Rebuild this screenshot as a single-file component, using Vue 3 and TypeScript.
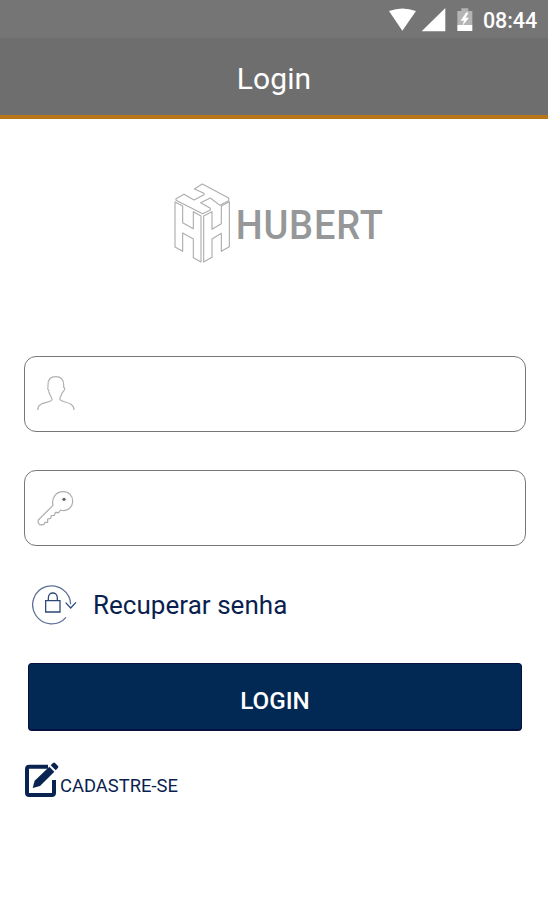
<script setup lang="ts">
import { ref } from 'vue'

const user = ref<string>('')
const password = ref<string>('')
</script>

<template>
  <main class="screen">
    <div class="status">
      <svg class="status-icons" viewBox="0 0 270 114" aria-hidden="true">
        <path d="M57 33Q97 18 138 33L97 92Z" fill="#fff" />
        <path d="M155 94L226 24V94Z" fill="#fff" />
        <path d="M262 33h12v-8h21v8h12v43h-45Z" fill="#b4b4b4" />
        <path d="M262 75h45v18h-45Z" fill="#fff" />
        <path d="M289 37l-17 25h10l-5 16 20-25h-10l8-15Z" fill="#fff" />
      </svg>
      <span class="clock">08:44</span>
    </div>
    <header class="bar"><h1>Login</h1></header>

    <svg class="logo" viewBox="0 0 720 315" role="img" aria-label="HUBERT">
      <g fill="none" stroke="#adadad" stroke-width="3.4" stroke-linejoin="round">
        <path d="M127 42L206 84V92L180 106L151 84L122 98L151 115V120L128 131L48 91V86L72 73L102 90L132 74V70L103 57Z" />
        <path d="M45 96L68 108V158L100 176V125L123 138V276L100 263V207L68 189V244L45 231Z" />
        <path d="M131 138L156 125V178L184 161V108L208 95V230L184 244V190L156 207V262L131 276Z" />
      </g>
      <text transform="translate(227 208) scale(.92 1)" x="0" y="0" textLength="480" lengthAdjust="spacing">HUBERT</text>
    </svg>

    <form class="form" @submit.prevent>
      <label class="field">
        <svg viewBox="0 0 120 114" aria-hidden="true">
          <path d="M8 105C8 78 45 86 51 74Q51 67 46 62Q41 52 41 46Q36 42 39 36V30Q38 5 62 5Q86 5 86 30V37Q91 38 88 45Q85 50 81 54Q80 62 75 67V74C82 84 116 79 117 105" fill="none" stroke="#b2b2b2" stroke-width="3.6" />
        </svg>
        <input v-model="user" type="text" aria-label="Usuário" />
      </label>
      <label class="field">
        <svg viewBox="0 0 120 114" aria-hidden="true">
          <path d="M54 49C48 26 65 8 84 8C102 8 113 20 113 36C113 56 95 69 77 63L71 71L61 70L58 79L49 80L47 88L38 90V100L30 100L28 105Q22 110 13 106Q8 101 10 93Z" fill="none" stroke="#adadad" stroke-width="3.6" stroke-linejoin="round" />
          <circle cx="87" cy="31" r="5" fill="#666" />
        </svg>
        <input v-model="password" type="password" aria-label="Senha" />
      </label>

      <a class="recover">
        <svg viewBox="0 0 135 123" aria-hidden="true">
          <g fill="none" stroke="#2c477a" stroke-width="3.8">
            <path d="M102 100A57 57 0 1 1 116 61" stroke="#5c7095" />
            <path d="M101 56L116 72L132 55" />
            <path d="M41 50H84V84H41Z" />
            <path d="M49 50V42C49 22 76 22 76 42V50" />
          </g>
        </svg>
        <span>Recuperar senha</span>
      </a>

      <button class="submit" type="submit">LOGIN</button>

      <a class="register">
        <svg viewBox="0 0 108 111" aria-hidden="true">
          <path d="M72 14H16Q9 14 9 21V92Q9 99 16 99H83Q90 99 90 92V54" fill="none" stroke="#092450" stroke-width="12" />
          <path d="M26 78L32 56L76 14L91 29L48 72Z" fill="#092450" />
          <path d="M80 10L87 3Q90 0 94 4L102 12Q105 15 101 19L95 25Z" fill="#092450" />
        </svg>
        <span>CADASTRE-SE</span>
      </a>
    </form>
  </main>
</template>

<style>
body {
  background: #fff;
}
</style>

<style scoped>
.screen {
  box-sizing: border-box;
  width: 100%;
  height: 900px;
  overflow: hidden;
  background: #fff;
  font-family: Roboto, "Liberation Sans", sans-serif;
  display: flex;
  flex-direction: column;
}
.status {
  height: 38px;
  flex: none;
  background: #757575;
  display: flex;
  justify-content: flex-end;
  align-items: flex-start;
  padding-right: 11px;
  box-sizing: border-box;
}
.status-icons {
  width: 90px;
  height: 38px;
  margin-right: 23px;
  overflow: visible;
}
.clock {
  color: #fff;
  font-size: 21.5px;
  font-weight: 500;
  line-height: 41px;
  width: 54px;
  white-space: nowrap;
  letter-spacing: -0.1px;
}
.bar {
  height: 81px;
  flex: none;
  box-sizing: border-box;
  background: #6e6e6e;
  border-bottom: 4px solid #b97618;
  display: flex;
  align-items: center;
  justify-content: center;
}
h1 {
  margin: 4px 0 0;
  color: #fff;
  font-size: 30px;
  font-weight: 400;
  line-height: 36px;
  letter-spacing: 0.1px;
}
.logo {
  width: 240px;
  height: 105px;
  flex: none;
  margin: 51px 0 0 160px;
}
.logo text {
  font-size: 124px;
  font-weight: 500;
  fill: #969798;
}
.form {
  display: flex;
  flex-direction: column;
  padding: 81px 22px 0 24px;
}
.field {
  height: 76px;
  box-sizing: border-box;
  border: 1.5px solid #777;
  border-radius: 12px;
  margin-bottom: 38px;
  display: flex;
  align-items: center;
  padding: 0 12px 0 10px;
}
.field svg {
  width: 40px;
  height: 38px;
  flex: none;
}
.field input {
  flex: 1;
  border: 0;
  outline: 0;
  background: transparent;
  font: 24px Roboto, sans-serif;
  color: #333;
  margin-left: 12px;
}
.recover {
  display: flex;
  align-items: center;
  height: 41px;
  padding-left: 8px;
  color: #0b1f4f;
}
.recover svg {
  width: 45px;
  height: 41px;
}
.recover span {
  margin: 1px 0 0 16px;
  font-size: 26px;
  letter-spacing: 0.03px;
}
.submit {
  height: 68px;
  margin: 38px 4px 0;
  border: 1px solid #07103f;
  border-bottom-width: 2px;
  border-radius: 4px;
  background: #022953;
  color: #fff;
  font: 500 24.2px Roboto, sans-serif;
  padding: 9px 0 0;
}
.register {
  display: flex;
  align-items: flex-end;
  margin-top: 31px;
  color: #0b1f4f;
}
.register svg {
  width: 36px;
  height: 37px;
}
.register span {
  font-size: 18.4px;
  line-height: 22px;
  margin-bottom: 2px;
}
</style>
